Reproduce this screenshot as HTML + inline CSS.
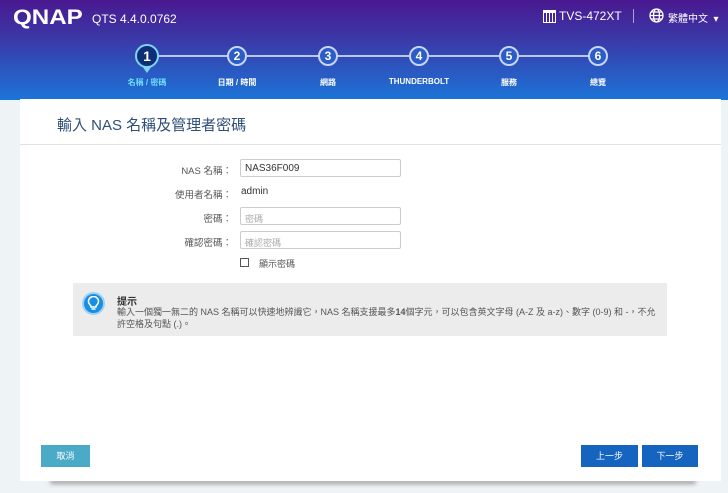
<!DOCTYPE html>
<html><head><meta charset="utf-8"><style>
*{margin:0;padding:0;box-sizing:border-box}
body{width:728px;height:493px;overflow:hidden;background:#eef3f6;font-family:"Liberation Sans","Noto Sans CJK TC",sans-serif;position:relative}
.hdr{position:absolute;left:0;top:0;width:728px;height:100px;background:linear-gradient(#4a1890 0%,#3a3aa8 40%,#1c74d8 100%)}
.abs{position:absolute}
.logo{left:13px;top:6px;color:#fff;font-weight:bold;font-size:21px;letter-spacing:0px;transform:scaleX(1.15);transform-origin:left}
.ver{left:92px;top:12px;color:#fff;font-size:12px}
.line{position:absolute;top:55px;height:2px;background:#b8c8f0}
.c{position:absolute;width:20px;height:20px;border-radius:50%;border:2px solid #c8d6f5;color:#fff;font-weight:bold;font-size:12px;text-align:center;line-height:16px;top:46px;background:#2b5cc8}
.lbl{position:absolute;top:77px;color:#fff;font-size:8px;font-weight:bold;transform:translateX(-50%);white-space:nowrap}
.card{left:20px;top:99px;width:701px;height:382px;background:#fff}
.shadow{left:50px;top:480px;width:646px;height:4px;background:#999;filter:blur(2px);border-radius:2px}
.t{left:57px;top:114px;font-size:15px;color:#2f4f7a}
.hr{left:20px;top:144px;width:701px;height:1px;background:#dde3e8}
.fl{font-size:9.5px;color:#555;text-align:right;width:100px;left:132px}
.in{left:240px;width:161px;height:18px;border:1px solid #ccc;border-radius:2px;font-size:9px;padding:4px 4px;color:#aaa}
.tip{left:73px;top:283px;width:594px;height:53px;background:#ececec}
.btn{position:absolute;top:445px;height:22px;color:#fff;font-size:9px;text-align:center;line-height:22px}
</style></head><body>
<div class="hdr"></div>
<div class="abs logo">QNAP</div>
<div class="abs ver">QTS 4.4.0.0762</div>
<div class="abs" style="left:543px;top:10px;width:13px;height:13px;border:1.5px solid #fff;border-top-width:3px;background:repeating-linear-gradient(90deg,transparent 0 2px,#fff 2px 3px)"></div>
<div class="abs" style="left:559px;top:9px;color:#fff;font-size:12px">TVS-472XT</div>
<div class="abs" style="left:633px;top:9px;width:1px;height:14px;background:#aab"></div>
<svg class="abs" style="left:649px;top:8px" width="15" height="15" viewBox="0 0 15 15" fill="none" stroke="#fff" stroke-width="1.3"><circle cx="7.5" cy="7.5" r="6.5"/><ellipse cx="7.5" cy="7.5" rx="3" ry="6.5"/><path d="M1 7.5h13M2 4h11M2 11h11"/></svg>
<div class="abs" style="left:668px;top:10px;color:#fff;font-size:10px">繁體中文 &nbsp;▾</div>
<div class="line" style="left:157px;width:432px"></div>
<div class="c" style="left:135px;top:44px;width:24px;height:24px;line-height:20px;font-size:14px;background:#0e2f78;border-color:#7fd4f5">1</div>
<div class="abs" style="left:142px;top:66px;border-left:5px solid transparent;border-right:5px solid transparent;border-top:7px solid #7fd4f5"></div>
<div class="c" style="left:227px">2</div><div class="c" style="left:318px">3</div><div class="c" style="left:409px">4</div><div class="c" style="left:499px">5</div><div class="c" style="left:588px">6</div>
<div class="lbl" style="left:147px;color:#6fdcff">名稱 / 密碼</div>
<div class="lbl" style="left:237px">日期 / 時間</div>
<div class="lbl" style="left:328px">網路</div>
<div class="lbl" style="left:419px">THUNDERBOLT</div>
<div class="lbl" style="left:509px">服務</div>
<div class="lbl" style="left:598px">總覽</div>
<div class="abs shadow"></div>
<div class="abs card"></div>
<div class="abs t">輸入 NAS 名稱及管理者密碼</div>
<div class="abs hr"></div>
<div class="abs fl" style="top:163px">NAS 名稱：</div>
<div class="abs in" style="top:159px;color:#333;font-size:10px;padding-top:3px">NAS36F009</div>
<div class="abs fl" style="top:187px">使用者名稱：</div>
<div class="abs" style="left:241px;top:186px;font-size:10px;color:#333">admin</div>
<div class="abs fl" style="top:211px">密碼：</div>
<div class="abs in" style="top:207px">密碼</div>
<div class="abs fl" style="top:235px">確認密碼：</div>
<div class="abs in" style="top:231px">確認密碼</div>
<div class="abs" style="left:240px;top:258px;width:9px;height:9px;border:1px solid #555"></div>
<div class="abs" style="left:259px;top:257px;font-size:9px;color:#555">顯示密碼</div>
<div class="abs tip"></div>
<div class="abs" style="left:82px;top:292px;width:23px;height:23px;border-radius:50%;background:#1a8ee0;border:2px solid #9bd2f5"></div>
<svg class="abs" style="left:87px;top:296px" width="13" height="15" viewBox="0 0 13 15" fill="none" stroke="#fff" stroke-width="1.5"><path d="M4 10C2 8 1.5 6.5 1.5 5.5a5 5 0 0 1 10 0c0 1-0.5 2.5-2.5 4.5V11H4z"/><path d="M4.5 13h4"/></svg>
<div class="abs" style="left:117px;top:293px;font-size:10px;font-weight:bold;color:#333">提示</div>
<div class="abs" style="left:117px;top:306px;width:545px;font-size:9px;line-height:12px;color:#555">輸入一個獨一無二的 NAS 名稱可以快速地辨識它，NAS 名稱支援最多<b>14</b>個字元，可以包含英文字母 (A-Z 及 a-z)、數字 (0-9) 和 -，不允許空格及句點 (.)。</div>
<div class="btn" style="left:41px;width:49px;background:#4aaac8">取消</div>
<div class="btn" style="left:581px;width:57px;background:#1565c0">上一步</div>
<div class="btn" style="left:642px;width:56px;background:#1565c0">下一步</div>
</body></html>
